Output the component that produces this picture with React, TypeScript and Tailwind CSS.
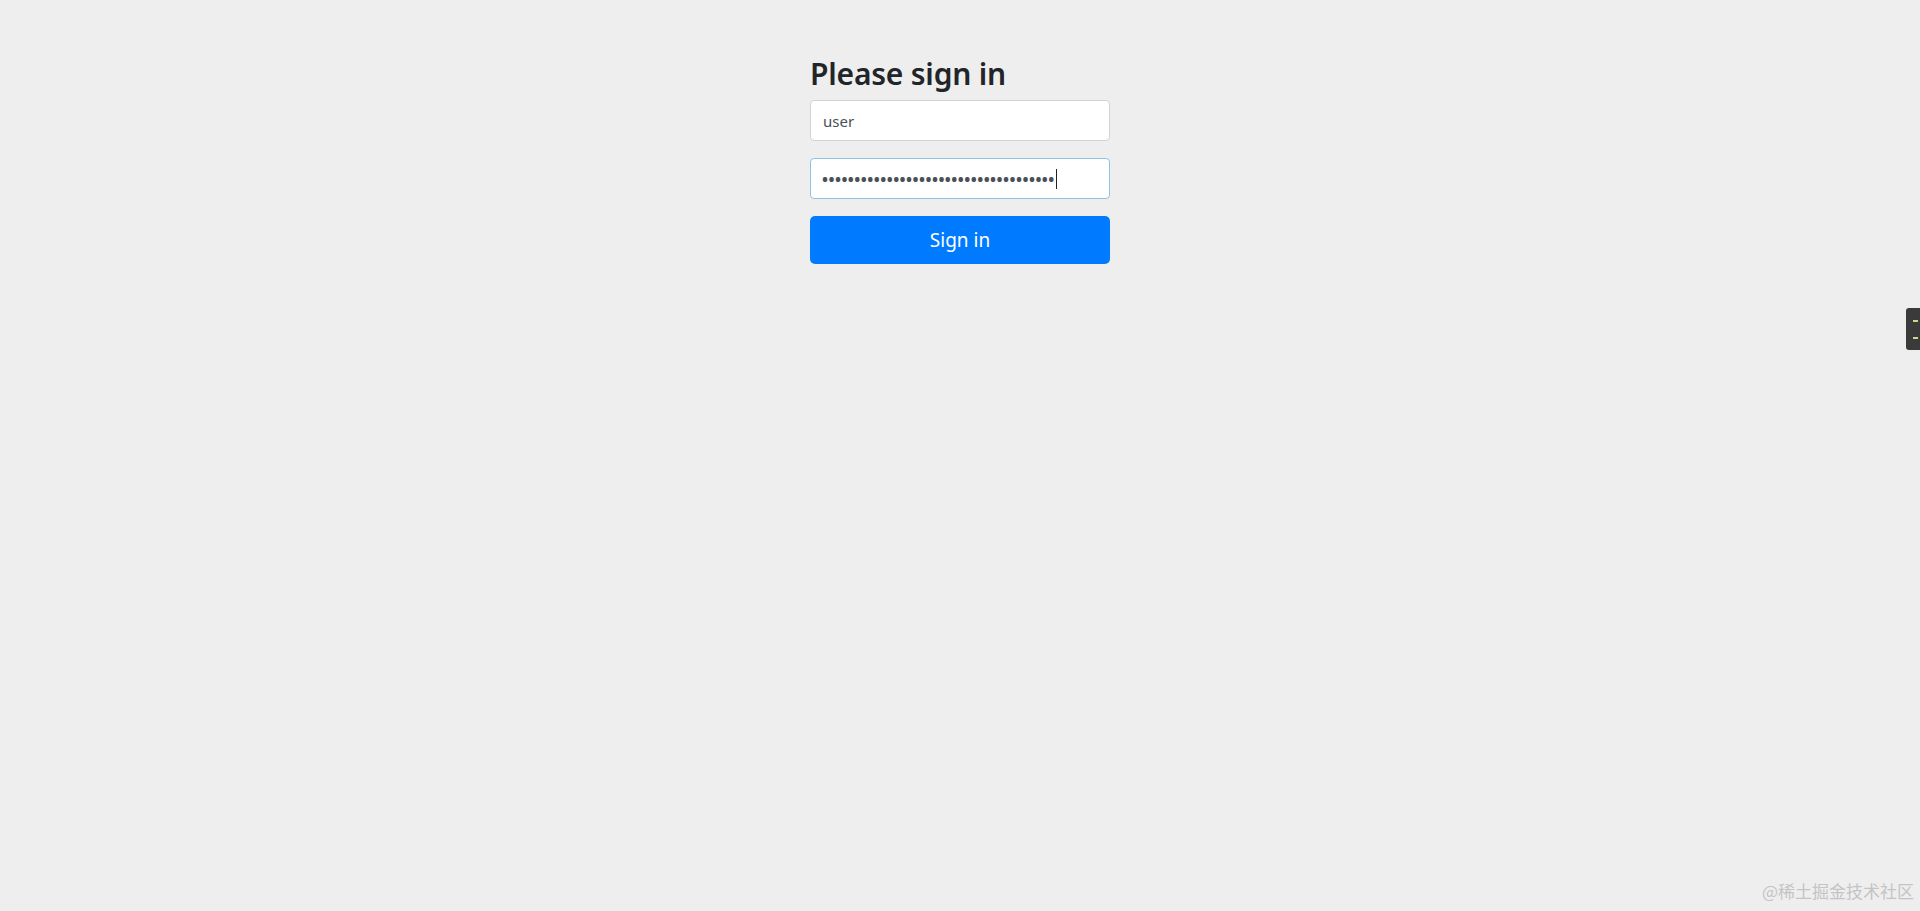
import React, { useState } from 'react';

const App: React.FC = () => {
    const [username, setUsername] = useState('user');
    const password = '•'.repeat(36);

    return (
        <div
            className="relative min-h-[911px] w-full bg-[#eeeeee] overflow-hidden"
            style={{ fontFamily: '"Noto Sans", "Open Sans", Arial, sans-serif' }}
        >
            <div className="flex justify-center">
                <form
                    className="w-[300px] mt-[55px] flex flex-col"
                    onSubmit={(e) => e.preventDefault()}
                >
                    <h2 className="text-[30px] leading-[38px] font-semibold tracking-[-0.2px] text-[#212529] mb-[7px]">
                        Please sign in
                    </h2>

                    <input
                        type="text"
                        id="username"
                        value={username}
                        onChange={(e) => setUsername(e.target.value)}
                        className="h-[41px] w-full bg-white border border-[#ced4da] rounded-[4px] px-[12px] text-[15px] text-[#495057] outline-none"
                    />

                    <div className="mt-[17px] h-[41px] w-full bg-white border border-[#8fc1e3] rounded-[4px] px-[11px] flex items-center text-[16px] font-bold text-[#495057]">
                        <span className="tracking-[0.45px]">{password}</span>
                        <span className="w-px h-[20px] bg-[#222] ml-[1px]" />
                    </div>

                    <button
                        type="submit"
                        className="mt-[17px] h-[48px] w-full bg-[#007bff] text-white text-[19px] rounded-[5px]"
                    >
                        Sign in
                    </button>
                </form>
            </div>

            {/* little side widget */}
            <div className="absolute right-0 top-[308px] w-[14px] h-[42px] bg-[#3a3a3a] rounded-l-[3px] flex flex-col items-end justify-around py-[4px] pr-[2px]">
                <span className="w-[5px] h-[2px] bg-[#c9d98a]" />
                <span className="w-[5px] h-[2px] bg-[#c9d98a]" />
            </div>

            <div
                className="absolute right-[6px] bottom-[8px] text-[17px] text-[#c4c4c4]"
                style={{ fontFamily: '"Noto Sans CJK SC", sans-serif' }}
            >
                @稀土掘金技术社区
            </div>
        </div>
    );
};

export default App;
